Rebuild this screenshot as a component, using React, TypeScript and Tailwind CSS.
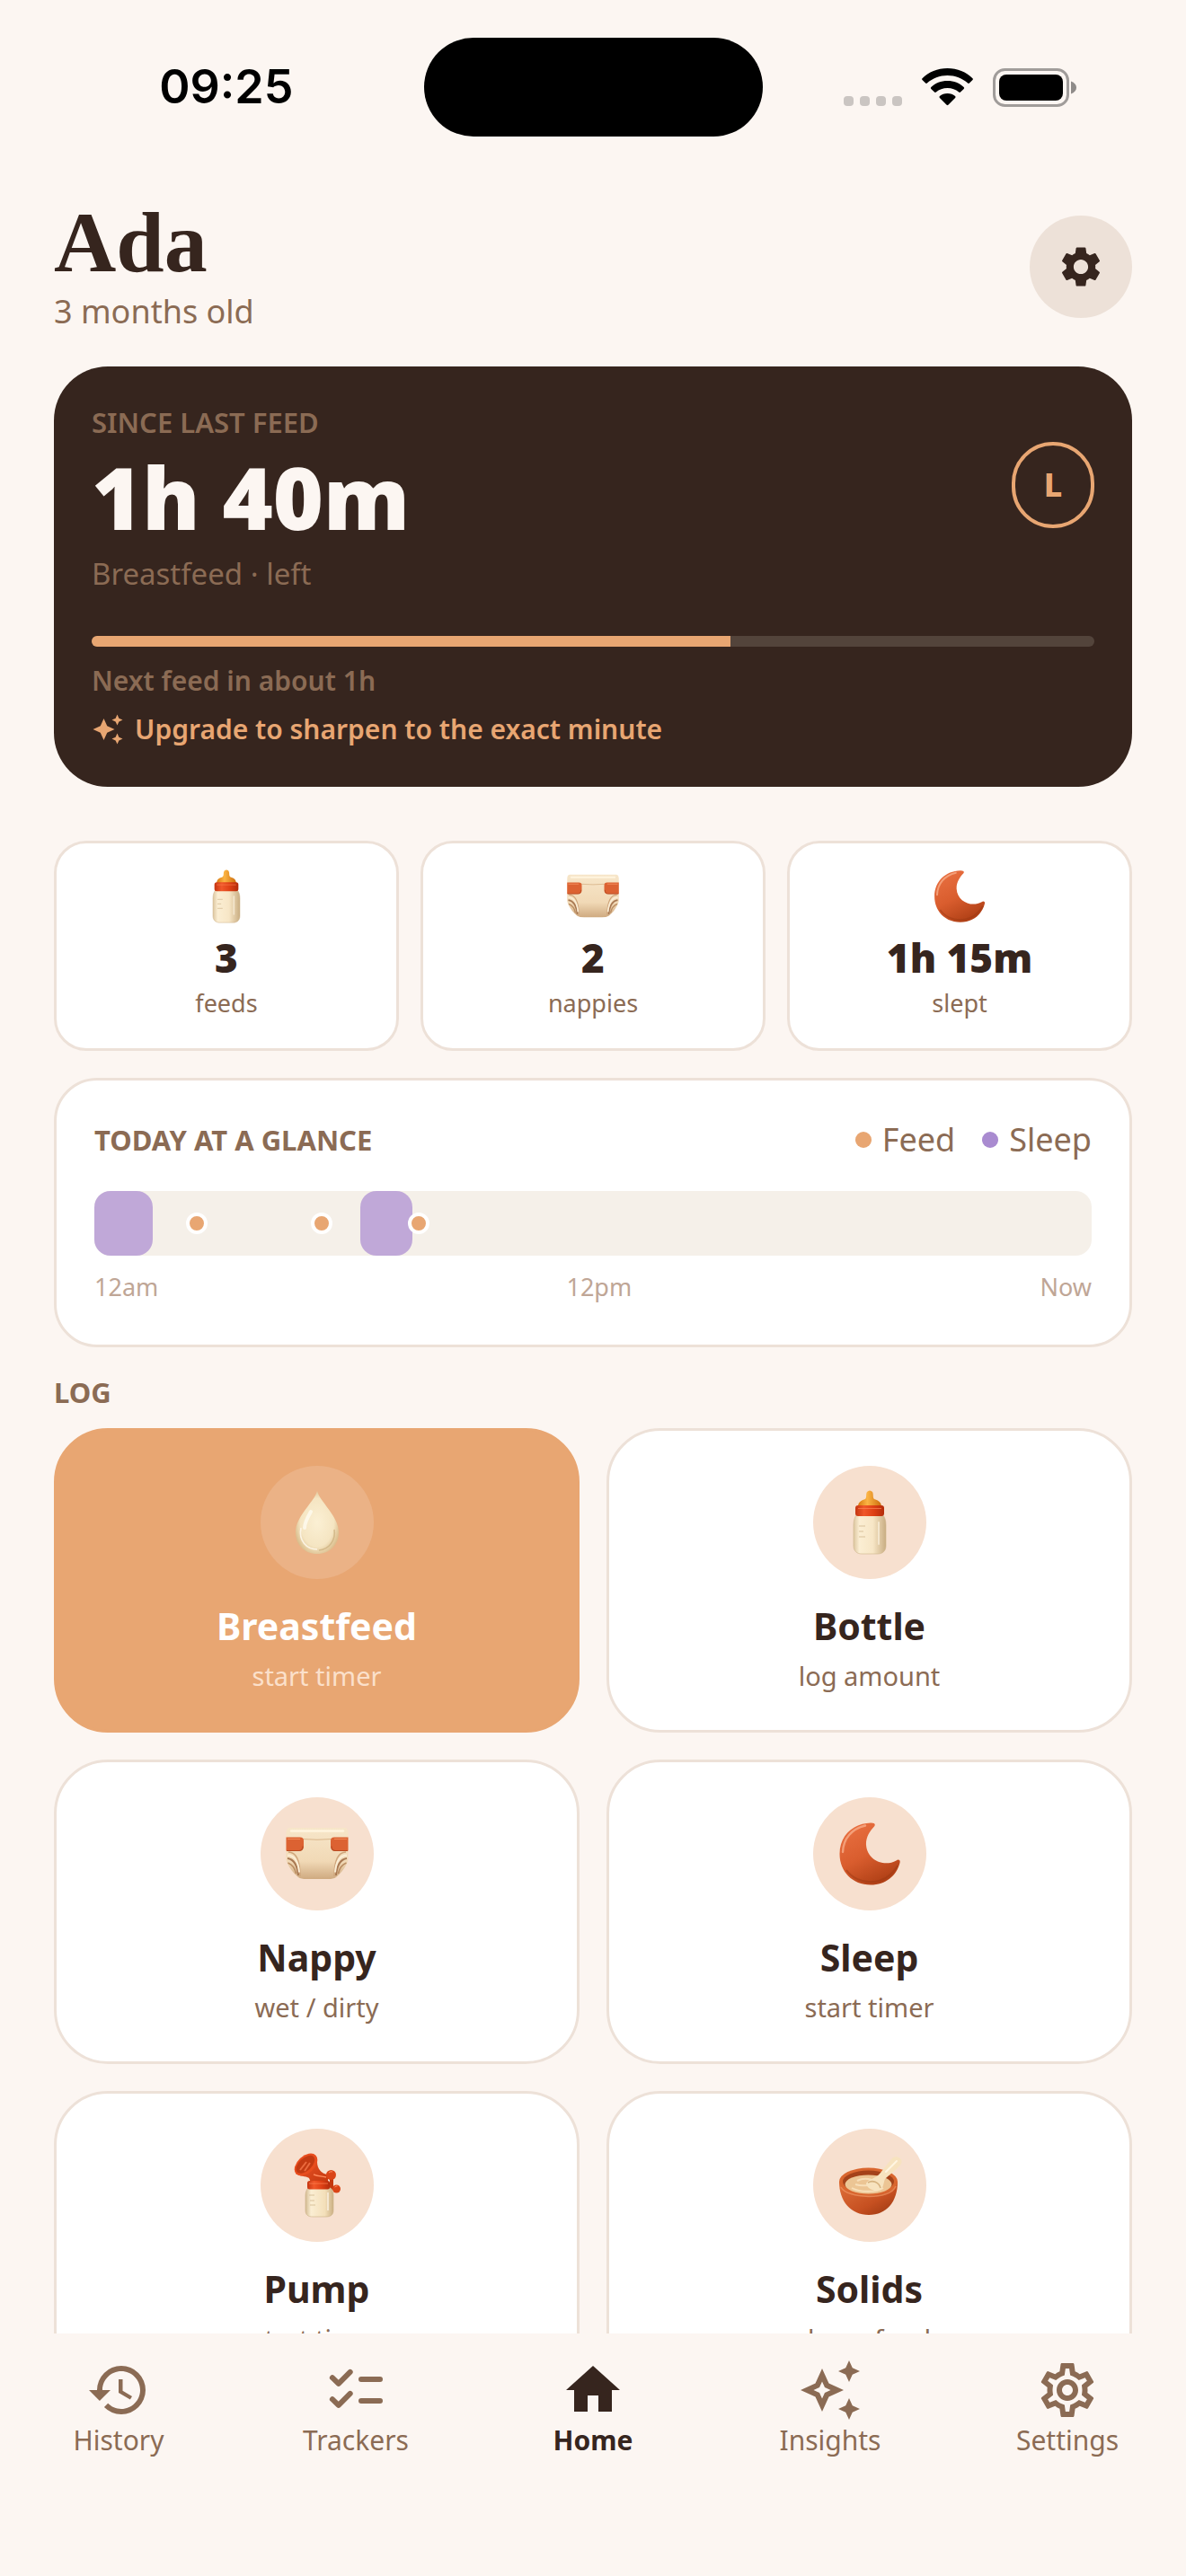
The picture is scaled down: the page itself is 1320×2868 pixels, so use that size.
import React from "react";
import { MdAutoAwesome, MdHistory, MdHome, MdOutlineAutoAwesome, MdOutlineSettings, MdSettings } from "react-icons/md";

function ChecklistIcon({ className }: { className?: string }) {
  return (
    <svg viewBox="0 0 24 24" className={className} fill="none" stroke="currentColor" strokeWidth="2" strokeLinecap="round" strokeLinejoin="round" aria-hidden="true">
      <path d="M3.300 7.400 5.600 9.600 9.900 5.300M3.300 15.400 5.600 17.600 9.900 13.300M14 8h7M14 16h7" />
    </svg>
  );
}

function BottleIcon({ className }: { className?: string }) {
  return (
    <svg viewBox="0 0 72 72" className={className} aria-hidden="true">
      <defs>
        <linearGradient id="milk" x1="0" x2="1">
          <stop offset="0" stopColor="#dcc6a0" />
          <stop offset=".18" stopColor="#fbeed3" />
          <stop offset=".6" stopColor="#f7e6c6" />
          <stop offset="1" stopColor="#c9ad82" />
        </linearGradient>
        <linearGradient id="teat" x1="0" x2="1">
          <stop offset="0" stopColor="#d97a10" />
          <stop offset=".4" stopColor="#fbb444" />
          <stop offset="1" stopColor="#cc6c0c" />
        </linearGradient>
        <linearGradient id="ring" x1="0" x2="1">
          <stop offset="0" stopColor="#c43511" />
          <stop offset=".3" stopColor="#f0582a" />
          <stop offset=".65" stopColor="#dd3f14" />
          <stop offset="1" stopColor="#b32c0b" />
        </linearGradient>
      </defs>
      <path d="M33 2q3-3 6 0c1.500 3 0 6 2 8 6 2 8 4 8 9H23c0-5 2-7 8-9 2-2 .5-5 2-8Z" fill="url(#teat)" />
      <path d="M22 27h28c3 3 4 7 4 12v23c0 6-4 9-9 9H27c-5 0-9-3-9-9V39c0-5 1-9 4-12Z" fill="url(#milk)" stroke="#cfb58c" strokeWidth=".6" />
      <rect x="20" y="17" width="32" height="12" rx="3" fill="url(#ring)" />
      <path d="M23 20.500h26" stroke="#ff8554" strokeWidth="1" opacity=".7" />
      <path d="M24 40h7M24 46h5M24 52h7" stroke="#d8c19a" strokeWidth="1" />
      <path d="M46 36v24" stroke="#fff8e8" strokeWidth="2" strokeLinecap="round" opacity=".6" />
    </svg>
  );
}

function NappyIcon({ className }: { className?: string }) {
  return (
    <svg viewBox="0 0 72 72" className={className} aria-hidden="true">
      <defs>
        <linearGradient id="cloth" x1="0" x2="0" y1="0" y2="1">
          <stop offset="0" stopColor="#f7e6c9" />
          <stop offset=".65" stopColor="#f1d9b6" />
          <stop offset="1" stopColor="#cfaa80" />
        </linearGradient>
      </defs>
      <path d="M5 7Q2 7 1.500 12v30C3 50 10 58 15 62q3 2 9 2h24q6 0 9-2c5-4 12-12 13.500-20V12Q70 7 67 7Z" fill="url(#cloth)" />
      <path d="M4 34c9 0 13 9 13 27M68 34c-9 0-13 9-13 27" stroke="#cfa67c" strokeWidth="1.400" fill="none" />
      <path d="M3 41c7 1 11 8 12 19M69 41c-7 1-11 8-12 19" stroke="#a87852" strokeWidth="2" fill="none" />
      <path d="M3.500 46c5 2 8 7 9 12M68.500 46c-5 2-8 7-9 12" stroke="#bb8d62" strokeWidth="1.600" fill="none" />
      <path d="M3 37.500c8 0 12 8 13 19M69 37.500c-8 0-12 8-13 19" stroke="#fbeed6" strokeWidth="2" fill="none" />
      <path d="M19 19.500q17 1.500 34 0" stroke="#d9b489" strokeWidth="1" fill="none" />
      <path d="M7 10.500h58" stroke="#fff4de" strokeWidth="2.400" strokeLinecap="round" />
      <path d="M1.500 17.500H17q4 0 4 4v6q0 5-5 5H1.500Z" fill="#dc6232" />
      <path d="M70.500 17.500H55q-4 0-4 4v6q0 5 5 5h14.500Z" fill="#dc6232" />
      <path d="M2 32.500h14q4 0 4-5M70 32.500H56q-4 0-4-5" stroke="#b94b22" strokeWidth="1.200" fill="none" />
      <path d="M3 19.500h14M55 19.500h14" stroke="#f08a58" strokeWidth="1.200" />
    </svg>
  );
}

function MoonIcon({ className }: { className?: string }) {
  return (
    <svg viewBox="0 0 72 72" className={className} aria-hidden="true">
      <defs>
        <linearGradient id="moon" x1=".1" y1="0" x2=".6" y2="1">
          <stop offset="0" stopColor="#ea7142" />
          <stop offset=".55" stopColor="#d95d2e" />
          <stop offset="1" stopColor="#b04016" />
        </linearGradient>
      </defs>
      <path d="M37 1.500C17 2 2.500 16 2.500 36S17 70.500 37 70.500c17 0 29-10.500 32.500-24.500.8-3-1.500-4.500-4-2.500C52 51 33 43 32 26c-.5-8 4-15.500 9-20.500 2-2.500 0-4.300-4-4Z" fill="url(#moon)" />
      <path d="M31 4.500C16 8 6.500 19 6 34" stroke="#f8ad88" strokeWidth="2.400" strokeLinecap="round" fill="none" opacity=".8" />
      <path d="M10 54c12 17 42 20 57-5" stroke="#9a3712" strokeWidth="2" fill="none" opacity=".45" />
    </svg>
  );
}

function DropIcon({ className }: { className?: string }) {
  return (
    <svg viewBox="0 0 72 72" className={className} aria-hidden="true">
      <defs>
        <radialGradient id="drop" cx=".5" cy=".5" r=".55">
          <stop offset="0" stopColor="#fbf0d4" />
          <stop offset=".7" stopColor="#f5e5c2" />
          <stop offset="1" stopColor="#d9bc8a" />
        </radialGradient>
      </defs>
      <path d="M36 1c3 12 24 28 24 46 0 14-10 24-24 24S12 61 12 47C12 29 33 13 36 1Z" fill="url(#drop)" />
      <path d="M18 42c-3 14 6 24 18 24" stroke="#fffaf0" strokeWidth="1.600" fill="none" opacity=".8" />
      <path d="M55 44c2 12-6 22-17 23" stroke="#c4a673" strokeWidth="1.600" fill="none" opacity=".6" />
      <path d="M29 24c-4 7-7 12-7 18" stroke="#fffdf6" strokeWidth="4" strokeLinecap="round" fill="none" opacity=".7" />
    </svg>
  );
}

function PumpIcon({ className }: { className?: string }) {
  return (
    <svg viewBox="0 0 72 72" className={className} aria-hidden="true">
      <defs>
        <linearGradient id="pump" x1="0" x2="1" y1="0" y2="1">
          <stop offset="0" stopColor="#f0582a" />
          <stop offset="1" stopColor="#c4380f" />
        </linearGradient>
        <linearGradient id="jar" x1="0" x2="1">
          <stop offset="0" stopColor="#d3bb93" />
          <stop offset=".2" stopColor="#fbeed3" />
          <stop offset=".7" stopColor="#f3dfb9" />
          <stop offset="1" stopColor="#cbb084" />
        </linearGradient>
        <linearGradient id="collar" x1="0" x2="1">
          <stop offset="0" stopColor="#c43511" />
          <stop offset=".3" stopColor="#f0582a" />
          <stop offset=".65" stopColor="#dd3f14" />
          <stop offset="1" stopColor="#b32c0b" />
        </linearGradient>
      </defs>
      <path d="M52 26v12l5 3" stroke="#c4380f" strokeWidth="4" fill="none" />
      <path d="M12 23c8 4 13 3 15 5l2 5h19V24c-8-1-12-7-12-14L34 4Z" fill="url(#pump)" />
      <path d="M32 24c5 2 10 2 14 3" stroke="#ff8a5c" strokeWidth="1.400" fill="none" />
      <circle cx="51.500" cy="24.500" r="5.500" fill="#da4417" />
      <circle cx="57.500" cy="40" r="4.500" fill="#da4417" />
      <path d="M49 22q2-2 4-1M55.500 38q1.500-1.500 3-1" stroke="#ff8a5c" fill="none" />
      <ellipse cx="23.500" cy="13" rx="15" ry="9.500" transform="rotate(-43 23.500 13)" fill="#e84d1e" />
      <ellipse cx="22.800" cy="12.800" rx="12.500" ry="7" transform="rotate(-43 22.800 12.800)" fill="#c23a12" />
      <path d="m17 19 7-9M22 20l6-9" stroke="#ea6a3e" strokeWidth="2" />
      <path d="M26 39h25c2 2 3 5 3 8v17c0 5-3 7-8 7H31c-5 0-8-2-8-7V47c0-3 1-6 3-8Z" fill="url(#jar)" stroke="#cbb084" strokeWidth=".6" />
      <rect x="25" y="31" width="25" height="9.500" rx="2.500" fill="url(#collar)" />
      <path d="M27 34h21" stroke="#ff8554" opacity=".7" />
      <path d="M27 47h6M28 53h5M28 58h6" stroke="#d8c19a" />
      <path d="M48 44v20" stroke="#fffaf0" strokeWidth="2" opacity=".6" />
    </svg>
  );
}

function BowlIcon({ className }: { className?: string }) {
  return (
    <svg viewBox="0 0 72 72" className={className} aria-hidden="true">
      <defs>
        <linearGradient id="bowl" x1="0" x2="1" y1="0" y2="1">
          <stop offset="0" stopColor="#e0713b" />
          <stop offset=".6" stopColor="#c65021" />
          <stop offset="1" stopColor="#973610" />
        </linearGradient>
      </defs>
      <path d="M2 32c0 22 13 37 33 37s32-15 32-37Z" fill="url(#bowl)" />
      <ellipse cx="34.500" cy="32" rx="32.500" ry="15.500" fill="#d9662f" />
      <ellipse cx="34.500" cy="32" rx="28.500" ry="12.500" fill="#a4421a" />
      <ellipse cx="34.500" cy="35" rx="26" ry="10.500" fill="#ecc594" />
      <path d="M22 31c8-4 19-2 18 2s-14 4-20 2M16 39c9 5 27 5 35 0" stroke="#f8dfb9" strokeWidth="2" fill="none" />
      <path d="M4 38c6 13 55 15 61-1" stroke="#ef9562" strokeWidth="1.600" fill="none" opacity=".7" />
      <path d="M48 22 60 7c4-6 14-1 11 5-3 5-13 12-18 17-2 4-1 11-7 13-7 1-14-4-14-8 3-6 11-5 16-12Z" fill="#f7e3bf" />
      <path d="M34 33c5-3 12-1 14 6" stroke="#d6b27f" strokeWidth="1.600" fill="none" />
      <path d="m54 21 12-12" stroke="#fff6e2" strokeWidth="2" strokeLinecap="round" />
    </svg>
  );
}

type IconType = React.ComponentType<{ className?: string }>;

const stats: { value: string; label: string; Icon: IconType }[] = [
  { value: "3", label: "feeds", Icon: BottleIcon },
  { value: "2", label: "nappies", Icon: NappyIcon },
  { value: "1h 15m", label: "slept", Icon: MoonIcon },
];

const actions: { title: string; note: string; Icon: IconType; primary?: boolean }[] = [
  { title: "Breastfeed", note: "start timer", Icon: DropIcon, primary: true },
  { title: "Bottle", note: "log amount", Icon: BottleIcon },
  { title: "Nappy", note: "wet / dirty", Icon: NappyIcon },
  { title: "Sleep", note: "start timer", Icon: MoonIcon },
  { title: "Pump", note: "start timer", Icon: PumpIcon },
  { title: "Solids", note: "log a food", Icon: BowlIcon },
];

const tabs: { label: string; Icon: IconType; active?: boolean }[] = [
  { label: "History", Icon: MdHistory },
  { label: "Trackers", Icon: ChecklistIcon },
  { label: "Home", Icon: MdHome, active: true },
  { label: "Insights", Icon: MdOutlineAutoAwesome },
  { label: "Settings", Icon: MdOutlineSettings },
];

const sleeps = [
  { start: 0, length: 5.9 },
  { start: 26.7, length: 5.2 },
];
const feeds = [10.3, 22.8, 32.5];

function StatusBar() {
  return (
    <div className="grid h-[194px] grid-cols-[1fr_auto_1fr] items-center text-black">
      <time className="pl-8 text-center font-['Inter'] text-[52px] leading-[60px] font-semibold">09:25</time>
      <div className="h-[110px] w-[377px] rounded-full bg-black" />
      <div className="flex items-center justify-end gap-[22px] pr-[122px]">
        <div className="flex gap-[7px] pt-[30px]">
          <span className="size-[11px] rounded-[4px] bg-[#cac5c2]" />
          <span className="size-[11px] rounded-[4px] bg-[#cac5c2]" />
          <span className="size-[11px] rounded-[4px] bg-[#cac5c2]" />
          <span className="size-[11px] rounded-[4px] bg-[#cac5c2]" />
        </div>
        <svg viewBox="0 0 57 42" className="h-[42px] w-[57px]" aria-label="Wi-Fi">
          <path d="M28.500 0C39.500 0 49.500 4.200 56.500 11.200q.8.900 0 1.800l-3.600 3.600q-.9.800-1.800 0C45 11 37.200 8 28.500 8S12 11 5.900 16.600q-.9.800-1.800 0L.5 13q-.8-.9 0-1.800C7.500 4.200 17.500 0 28.500 0Z" />
          <path d="M28.500 14c7.200 0 13.500 2.600 18.200 7q1 .9 0 1.900l-3.700 3.600q-.9.900-1.900 0C37.700 23.600 33.400 22 28.500 22s-9.200 1.600-12.600 4.500q-1 .9-1.900 0l-3.700-3.600q-1-1 0-1.900c4.700-4.400 11-7 18.200-7Z" />
          <path d="M28.500 28c3.400 0 6.400 1.200 8.600 3.100q1 1 0 1.900l-7.700 7.700q-.9.900-1.800 0L19.900 33q-1-.9 0-1.900c2.200-1.900 5.200-3.100 8.600-3.100Z" />
        </svg>
        <svg viewBox="0 0 93 43" className="h-[43px] w-[93px]" aria-label="Battery">
          <rect x="1.500" y="1.500" width="82" height="40" rx="12" fill="none" stroke="#a09c9a" strokeWidth="3" />
          <rect x="7" y="7" width="71" height="29" rx="8" />
          <path d="M87 14.500c4 1.500 6 4 6 7s-2 5.500-6 7Z" fill="#8f8b89" />
        </svg>
      </div>
    </div>
  );
}

function LastFeedCard() {
  return (
    <section className="mt-8 rounded-[60px] bg-[#36251e] px-[42px] pt-[42px] pb-11 text-[#8b6b54]">
      <div className="flex items-start justify-between">
        <div>
          <h2 className="text-[31px] leading-[40px] font-semibold">SINCE LAST FEED</h2>
          <p className="text-[96px] leading-[126px] font-black text-[#fcf6f2]">1h 40m</p>
          <p className="text-[33px] leading-[46px]">Breastfeed · left</p>
        </div>
        <span className="mt-[42px] flex h-24 w-[92px] items-center justify-center rounded-full border-4 border-[#e8a672] text-[36px] font-extrabold text-[#e8a672]">L</span>
      </div>
      <div role="progressbar" aria-label="Time until next feed" aria-valuenow={64} className="mt-[46px] h-3 overflow-hidden rounded-full bg-[#53443b]">
        <div className="h-full bg-[#e8a672]" style={{ width: "63.7%" }} />
      </div>
      <p className="mt-[18px] text-[30px] leading-[40px] font-semibold">Next feed in about 1h</p>
      <button type="button" className="mt-[14px] flex items-center gap-3 text-[30px] leading-[40px] font-semibold text-[#e8a672]">
        <MdAutoAwesome className="size-9" />
        Upgrade to sharpen to the exact minute
      </button>
    </section>
  );
}

function GlanceCard() {
  return (
    <section className="mt-[30px] rounded-[48px] border-[3px] border-[#ede1d8] bg-white px-[42px] pt-[42px] pb-[45px]">
      <div className="flex items-center justify-between text-[#8b6b54]">
        <h2 className="text-[31px] leading-[48px] font-bold">TODAY AT A GLANCE</h2>
        <div className="flex items-center gap-[30px] text-[36px] leading-[48px]">
          <span className="flex items-center gap-3">
            <i className="size-[18px] rounded-full bg-[#e8a672]" />Feed
          </span>
          <span className="flex items-center gap-3">
            <i className="size-[18px] rounded-full bg-[#a98bd0]" />Sleep
          </span>
        </div>
      </div>
      <div className="relative mt-[33px] h-[72px] rounded-[18px] bg-[#f5f0e9]">
        {sleeps.map((s) => (
          <span key={s.start} className="absolute inset-y-0 rounded-[18px] bg-[#c0a8d8]" style={{ left: `${s.start}%`, width: `${s.length}%` }} />
        ))}
        {feeds.map((f) => (
          <span key={f} className="absolute top-1/2 size-6 -translate-x-1/2 -translate-y-1/2 rounded-full border-4 border-white bg-[#e8a672]" style={{ left: `${f}%` }} />
        ))}
      </div>
      <div className="mt-4 flex justify-between text-[27px] leading-[38px] text-[#bfa696]">
        <span>12am</span>
        <span>12pm</span>
        <span>Now</span>
      </div>
    </section>
  );
}

export default function App() {
  return (
    <div className="flex h-screen flex-col overflow-hidden bg-[#fcf6f2] font-['Noto_Sans',sans-serif] text-[#36251e]">
      <StatusBar />
      <main className="min-h-0 flex-1 overflow-hidden px-[60px] pt-6">
        <header className="flex items-center justify-between">
          <div className="pb-1">
            <h1 className="font-['Liberation_Serif',serif] text-[96px] leading-[104px] font-bold">Ada</h1>
            <p className="text-[36px] leading-[50px] text-[#8b6b54]">3 months old</p>
          </div>
          <button type="button" aria-label="Settings" className="flex size-[114px] items-center justify-center rounded-full bg-[#ede1d8]">
            <MdSettings className="size-[54px]" />
          </button>
        </header>

        <LastFeedCard />

        <section className="mt-[60px] grid grid-cols-3 gap-6">
          {stats.map(({ value, label, Icon }) => (
            <div key={label} className="flex flex-col items-center rounded-[36px] border-[3px] border-[#ede1d8] bg-white pt-[29px] pb-[31px]">
              <Icon className="size-[60px]" />
              <strong className="mt-[6px] text-[44px] leading-[64px] font-black">{value}</strong>
              <span className="text-[27px] leading-[38px] text-[#8b6b54]">{label}</span>
            </div>
          ))}
        </section>

        <GlanceCard />

        <h2 className="mt-[30px] text-[31px] leading-[40px] font-bold text-[#8b6b54]">LOG</h2>
        <section className="mt-5 grid grid-cols-2 gap-[30px]">
          {actions.map(({ title, note, Icon, primary }) => (
            <button
              key={title}
              type="button"
              className={
                primary
                  ? "flex flex-col items-center rounded-[60px] border-[3px] border-[#e8a672] bg-[#e8a672] pt-[39px] pb-[38px] text-white"
                  : "flex flex-col items-center rounded-[60px] border-[3px] border-[#ede1d8] bg-white pt-[39px] pb-[38px]"
              }
            >
              <span className={primary ? "flex size-[126px] items-center justify-center rounded-full bg-[#ebb286]" : "flex size-[126px] items-center justify-center rounded-full bg-[#f7e0cf]"}>
                <Icon className="size-[72px]" />
              </span>
              <span className="mt-[22px] text-[41px] leading-[60px] font-bold">{title}</span>
              <span className={primary ? "mt-1 text-[29px] leading-[44px] text-[#fbe0cb]" : "mt-1 text-[29px] leading-[44px] text-[#8b6b54]"}>{note}</span>
            </button>
          ))}
        </section>
      </main>

      <nav className="grid h-[270px] shrink-0 grid-cols-5 items-start pt-[27px]">
        {tabs.map(({ label, Icon, active }) => (
          <a key={label} href="#" aria-current={active ? "page" : undefined} className={active ? "flex flex-col items-center text-[30px] leading-[40px] font-bold" : "flex flex-col items-center text-[30px] leading-[40px] text-[#8b6b54]"}>
            <Icon className="size-[72px]" />
            {label}
          </a>
        ))}
      </nav>
    </div>
  );
}
